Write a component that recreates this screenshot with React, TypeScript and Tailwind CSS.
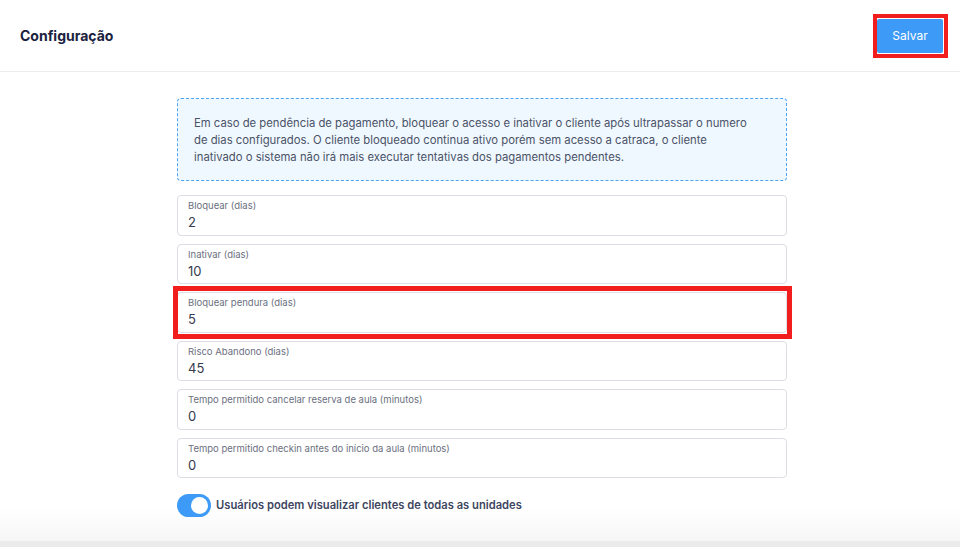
const FIELDS = [
  { label: 'Bloquear (dias)', value: '2' },
  { label: 'Inativar (dias)', value: '10' },
  { label: 'Bloquear pendura (dias)', value: '5', highlight: true },
  { label: 'Risco Abandono (dias)', value: '45' },
  { label: 'Tempo permitido cancelar reserva de aula (minutos)', value: '0' },
  { label: 'Tempo permitido checkin antes do início da aula (minutos)', value: '0' },
];

export default function App() {
  return (
    <div className="flex h-[547px] w-[960px] flex-col overflow-hidden bg-white font-['Inter',sans-serif]">
      {/* Header */}
      <header className="flex h-[72px] shrink-0 items-center justify-between border-b border-[#ececec] pl-5 pr-[17px]">
        <h1 className="text-[14px] font-bold text-[#1b2240]">Configuração</h1>
        <button className="relative h-[34px] w-[66px] rounded-[2px] bg-[#3d9bf7] text-[12px] text-white">
          Salvar
          <span className="pointer-events-none absolute -inset-x-[4.5px] -inset-y-[5px] border-[4.5px] border-[#f21d1d]" />
        </button>
      </header>

      {/* Conteúdo */}
      <main className="flex flex-1 flex-col items-center bg-gradient-to-b from-white from-[93%] to-[#f6f6f6] pl-[4px] pt-[26px]">
        <div className="flex w-[610px] flex-col">
          <div className="h-[83px] rounded-[4px] border border-dashed border-[#4aa3f3] bg-[#f0f8ff] px-4 pt-[16px]">
            <p className="max-w-[558px] text-[11.3px] leading-[17px] text-[#4a5268]">
              Em caso de pendência de pagamento, bloquear o acesso e inativar o cliente após ultrapassar o numero de
              dias configurados. O cliente bloqueado continua ativo porém sem acesso a catraca, o cliente inativado o
              sistema não irá mais executar tentativas dos pagamentos pendentes.
            </p>
          </div>

          <div className="mt-[14px] flex flex-col gap-2">
            {FIELDS.map((field) => (
              <div
                key={field.label}
                className="relative flex h-[40.5px] flex-col justify-center rounded-[4px] border border-[#dcdee6] bg-white pl-[10px]"
              >
                <span className="text-[9.5px] leading-[12px] text-[#6b7080]">{field.label}</span>
                <span className="mt-[2px] text-[13px] leading-[16px] text-[#353b4d]">{field.value}</span>
                {field.highlight && (
                  <span className="pointer-events-none absolute -top-[7px] -right-[6px] -bottom-[7px] -left-[5px] border-[5px] border-[#f21d1d]" />
                )}
              </div>
            ))}
          </div>

          <div className="mt-[16px] flex items-center gap-[5px]">
            <div className="flex h-[23px] w-[34px] items-center justify-end rounded-full bg-[#3d9bf7] pr-[3px]">
              <div className="h-[17px] w-[17px] rounded-full bg-white" />
            </div>
            <span className="text-[11.2px] font-semibold text-[#3d4560]">
              Usuários podem visualizar clientes de todas as unidades
            </span>
          </div>
        </div>
      </main>

      <div className="h-[6px] shrink-0 bg-[#ebebeb]" />
    </div>
  );
}
